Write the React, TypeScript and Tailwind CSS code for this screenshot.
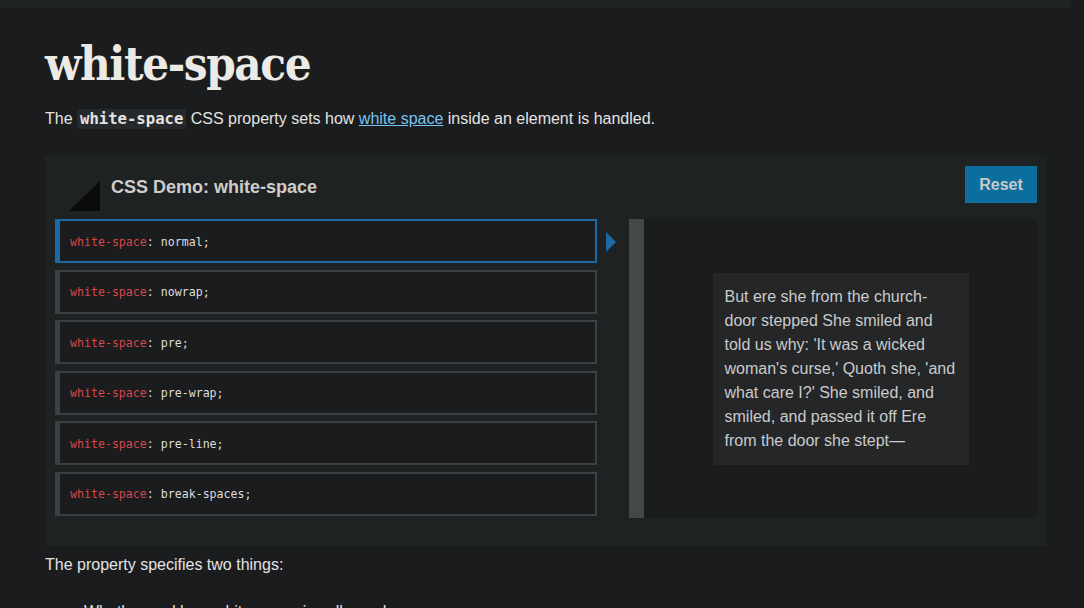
const choices = ["normal", "nowrap", "pre", "pre-wrap", "pre-line", "break-spaces"];

const poem =
  "But ere she from the church-door stepped She smiled and told us why: 'It was a wicked woman's curse,' Quoth she, 'and what care I?' She smiled, and smiled, and passed it off Ere from the door she stept—";

function Choice({ value, selected }: { value: string; selected?: boolean }) {
  return (
    <div
      className={
        "flex h-[44px] items-center border-2 border-l-[5px] bg-[#1b1c1e] pl-[10px] " +
        (selected ? "border-[#1b6aa5]" : "border-[#3c4043]")
      }
    >
      <code className="font-['DejaVu_Sans_Mono',monospace] text-[11.6px] leading-[16px] pt-px">
        <span className="text-[#d6474b]">white-space</span>
        <span className="text-[#dedede]">: {value};</span>
      </code>
    </div>
  );
}

export default function App() {
  return (
    <div className="min-h-screen bg-[#1b1c1e] font-['Liberation_Sans',Arial,sans-serif] text-[#e3e3e3]">
      <div className="h-2 w-[1071px] bg-[#1f2324]" />
      <main className="w-[1002px] pl-[45px] box-content">
        <h1 className="mt-[30px] font-['DejaVu_Serif_Condensed','DejaVu_Serif',serif] text-[47px] font-bold leading-[52px] tracking-[-1.4px] text-[#eceae5]">
          white-space
        </h1>
        <p className="mt-[17px] text-[16px] leading-[24px]">
          The{" "}
          <code className="rounded-[2px] bg-[#26292b] px-[3px] py-[1px] font-['DejaVu_Sans_Mono',monospace] text-[15.6px] font-bold">
            white-space
          </code>{" "}
          CSS property sets how{" "}
          <a href="#" className="text-[#79c3f3] underline">
            white space
          </a>{" "}
          inside an element is handled.
        </p>

        {/* interactive example */}
        <section className="mt-[25px] bg-[#1f2223] px-[10px] pb-[28px]">
          <header className="flex h-[63px] justify-between pt-[10px]">
            <div className="flex items-start">
              <svg width="31" height="30" viewBox="0 0 31 30" className="ml-[14px] mt-[15px]">
                <polygon points="31,0 31,30 0,30" fill="#0b0b0b" />
              </svg>
              <h2 className="ml-[11px] mt-[10px] text-[18px] font-bold leading-[22px] text-[#cfcdca]">
                CSS Demo: white-space
              </h2>
            </div>
            <button className="h-[37px] w-[72px] bg-[#0b6e9d] text-[16px] font-bold text-[#c9c9c9]">
              Reset
            </button>
          </header>

          <div className="flex">
            <div className="flex w-[542px] flex-col gap-[6.6px]">
              {choices.map((c, i) => (
                <Choice key={c} value={c} selected={i === 0} />
              ))}
            </div>
            <div className="w-[32px] pl-[9px] pt-[13px]">
              <svg width="10" height="20" viewBox="0 0 10 20">
                <polygon points="0,0 10,10 0,20" fill="#1b6aa5" />
              </svg>
            </div>
            <div className="flex h-[299px] w-[408px] bg-[#1b1c1e]">
              <div className="w-[15px] bg-[#434849]" />
              <div className="flex flex-1 items-center justify-center">
                <div className="w-[256px] bg-[#242628] p-[12px] text-[16px] leading-[24px] text-[#cbcbcb]">
                  {poem}
                </div>
              </div>
            </div>
          </div>
        </section>

        <p className="mt-[7px] text-[16px] leading-[24px]">The property specifies two things:</p>
        <ul className="mt-[23px] list-disc pl-[39px] text-[16px] leading-[24px]">
          <li>Whether and how white space is collapsed.</li>
          <li>Whether and how lines wrap.</li>
        </ul>
      </main>
    </div>
  );
}
